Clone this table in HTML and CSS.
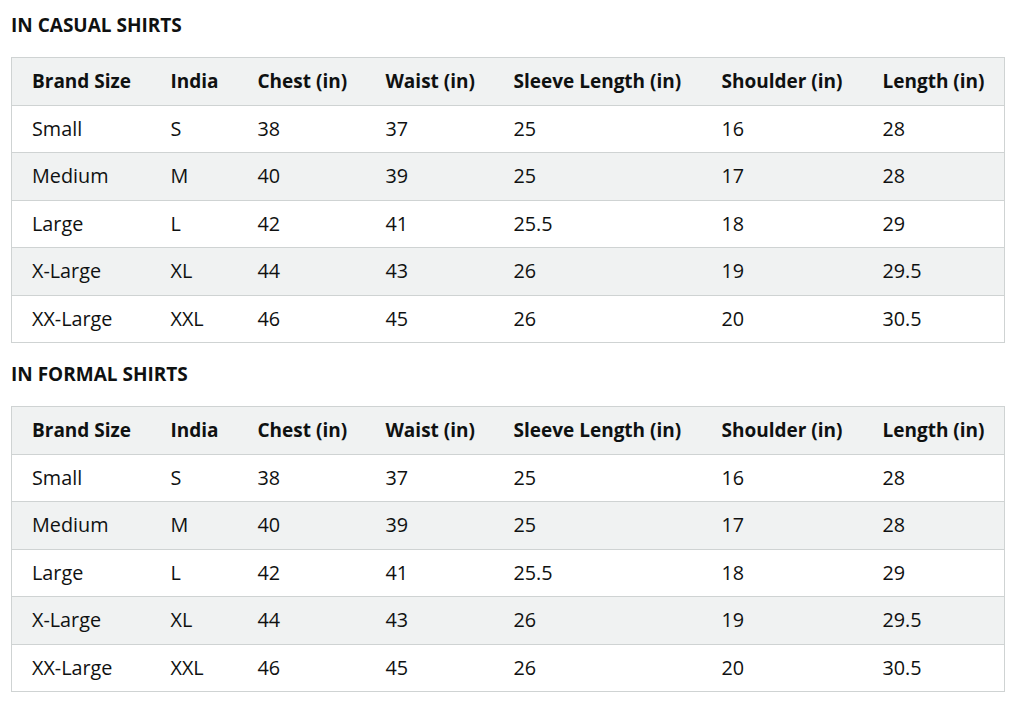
FILE: index.html
```html
<!DOCTYPE html>
<html lang="en">
<head>
<meta charset="utf-8">
<title>Size Chart</title>
<link rel="stylesheet" href="styles.css">
</head>
<body>
<div class="page">
  <h2 class="title">IN CASUAL SHIRTS</h2>
  <table class="chart">
    <colgroup>
      <col class="c1"><col class="c2"><col class="c3"><col class="c4"><col class="c5"><col class="c6"><col class="c7">
    </colgroup>
    <thead>
      <tr><th>Brand Size</th><th>India</th><th>Chest (in)</th><th>Waist (in)</th><th>Sleeve Length (in)</th><th>Shoulder (in)</th><th>Length (in)</th></tr>
    </thead>
    <tbody>
      <tr><td>Small</td><td>S</td><td>38</td><td>37</td><td>25</td><td>16</td><td>28</td></tr>
      <tr><td>Medium</td><td>M</td><td>40</td><td>39</td><td>25</td><td>17</td><td>28</td></tr>
      <tr><td>Large</td><td>L</td><td>42</td><td>41</td><td>25.5</td><td>18</td><td>29</td></tr>
      <tr><td>X-Large</td><td>XL</td><td>44</td><td>43</td><td>26</td><td>19</td><td>29.5</td></tr>
      <tr><td>XX-Large</td><td>XXL</td><td>46</td><td>45</td><td>26</td><td>20</td><td>30.5</td></tr>
    </tbody>
  </table>
  <h2 class="title">IN FORMAL SHIRTS</h2>
  <table class="chart">
    <colgroup>
      <col class="c1"><col class="c2"><col class="c3"><col class="c4"><col class="c5"><col class="c6"><col class="c7">
    </colgroup>
    <thead>
      <tr><th>Brand Size</th><th>India</th><th>Chest (in)</th><th>Waist (in)</th><th>Sleeve Length (in)</th><th>Shoulder (in)</th><th>Length (in)</th></tr>
    </thead>
    <tbody>
      <tr><td>Small</td><td>S</td><td>38</td><td>37</td><td>25</td><td>16</td><td>28</td></tr>
      <tr><td>Medium</td><td>M</td><td>40</td><td>39</td><td>25</td><td>17</td><td>28</td></tr>
      <tr><td>Large</td><td>L</td><td>42</td><td>41</td><td>25.5</td><td>18</td><td>29</td></tr>
      <tr><td>X-Large</td><td>XL</td><td>44</td><td>43</td><td>26</td><td>19</td><td>29.5</td></tr>
      <tr><td>XX-Large</td><td>XXL</td><td>46</td><td>45</td><td>26</td><td>20</td><td>30.5</td></tr>
    </tbody>
  </table>
</div>
</body>
</html>
```
FILE: styles.css
```css
html, body {
  margin: 0;
  padding: 0;
  background: #ffffff;
}
body {
  font-family: "Open Sans", "Noto Sans", "Liberation Sans", sans-serif;
  color: #0f1111;
}
.page {
  padding: 13px 20px 0 11px;
}
.title {
  margin: 0 0 20px 0;
  font-size: 19px;
  line-height: 24px;
  font-weight: 700;
}
.chart {
  width: 993px;
  border-collapse: collapse;
  table-layout: fixed;
  border: 1px solid #cfd3d3;
  margin-bottom: 19px;
}
.c1 { width: 139px; }
.c2 { width: 87px; }
.c3 { width: 128px; }
.c4 { width: 128px; }
.c5 { width: 208px; }
.c6 { width: 161px; }
.c7 { width: 142px; }
.chart th,
.chart td {
  text-align: left;
  padding: 11px 0 11px 20px;
  line-height: 24.5px;
  font-size: 19.8px;
  border-top: 1px solid #cfd3d3;
  white-space: nowrap;
}
.chart th {
  font-weight: 700;
  font-size: 19px;
  background: #f0f2f2;
}
.chart td {
  font-weight: 400;
}
.chart tbody tr:nth-child(even) td {
  background: #f0f2f2;
}
```
